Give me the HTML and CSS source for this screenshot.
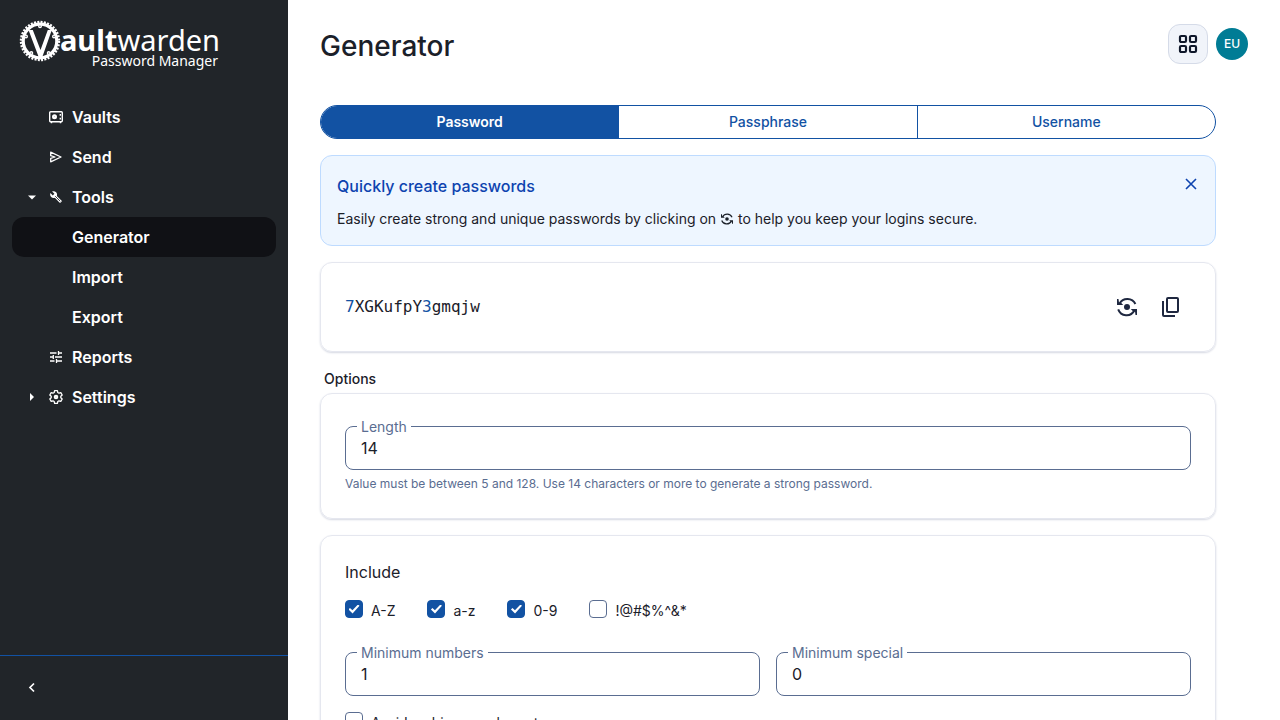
FILE: index.html
```html
<!DOCTYPE html>
<html lang="en">
<head>
    <meta charset="UTF-8">
    <meta name="viewport" content="width=device-width, initial-scale=1.0">
    <title>Generator | Vaultwarden Web</title>
    <link rel="stylesheet" href="styles.css">
</head>
<body>

<!-- shared icons -->
<svg class="sprite" aria-hidden="true">
    <symbol id="icon-generate" viewBox="0 0 20 20">
        <path d="M2.6 6.4A8.9 8.9 0 0 1 18.4 7M17.4 13.6A8.9 8.9 0 0 1 1.2 12.4" fill="none" stroke="currentColor" stroke-width="2"/>
        <path d="M0 2v6h6.2L4.3 6 2 5.6 1.5 2zM20 18v-6h-6.200l1.900 2 2.300.4.5 3.600z" fill="currentColor"/>
        <circle cx="10" cy="10" r="3" fill="currentColor"/>
    </symbol>
</svg>

<div class="layout">
    <aside class="sidebar">
        <a href="#" class="logo" aria-label="Vaultwarden Password Manager">
            <svg width="204" height="54" viewBox="0 0 204 54" fill="#fff">
                <circle cx="22" cy="23" r="18.800" fill="none" stroke="#fff" stroke-width="2.800" stroke-dasharray="2 1.281"/>
                <circle cx="22" cy="23" r="16.800" fill="none" stroke="#fff" stroke-width="3.200"/>
                <g fill="#212529" stroke="#fff" stroke-width="1.400">
                    <circle cx="22" cy="8.200" r="1.300"/>
                    <circle cx="36" cy="18.400" r="1.300"/>
                    <circle cx="30.700" cy="35" r="1.300"/>
                    <circle cx="13.300" cy="35" r="1.300"/>
                    <circle cx="8" cy="18.400" r="1.300"/>
                </g>
                <path d="M10.500 12h4.300L22.500 32 29.800 12h4L24.300 39h-3.600z"/>
                <text x="42" y="33" class="logo-name"><tspan class="logo-bold">ault</tspan>warden</text>
                <text x="200" y="48" text-anchor="end" class="logo-sub">Password Manager</text>
            </svg>
        </a>

        <nav class="nav">
            <a href="#" class="nav-item">
                <span class="caret"></span>
                <svg class="nav-icon" viewBox="0 0 16 16" fill="none" stroke="currentColor" stroke-width="1.400">
                    <rect x="1.700" y="2.700" width="12.600" height="10" rx="1"/>
                    <path d="M3.500 13v1.300M12.500 13v1.300M12.300 5v1.700M12.300 8.700v1.700"/>
                    <circle cx="6.500" cy="7.700" r="1.400" stroke-width="2.200"/>
                </svg>
                Vaults
            </a>
            <a href="#" class="nav-item">
                <span class="caret"></span>
                <svg class="nav-icon" viewBox="0 0 16 16" fill="none" stroke="currentColor" stroke-width="1.300">
                    <path d="M2.700 3.200 13 8 2.700 12.800V9.300L7 8 2.700 6.700z" stroke-linejoin="round"/>
                </svg>
                Send
            </a>
            <a href="#" class="nav-item">
                <svg class="caret" viewBox="0 0 16 16" fill="currentColor"><path d="M4 6.500h8l-4 4z"/></svg>
                <svg class="nav-icon" viewBox="-3 -3 30 30" fill="currentColor">
                    <path d="M22.700 19l-9.100-9.100c.9-2.300.4-5-1.500-6.900-2-2-5-2.400-7.400-1.300L9 6 6 9 1.600 4.700C.4 7.100.9 10.100 2.900 12.100c1.900 1.900 4.600 2.400 6.900 1.500l9.100 9.100c.4.4 1 .4 1.400 0l2.300-2.300c.5-.4.5-1.100.1-1.400z"/>
                    <path d="m10.500 10.500 9.500 9.500" stroke="#212529" stroke-width="1.600"/>
                </svg>
                Tools
            </a>
            <a href="#" class="nav-item nav-child active">Generator</a>
            <a href="#" class="nav-item nav-child">Import</a>
            <a href="#" class="nav-item nav-child">Export</a>
            <a href="#" class="nav-item">
                <span class="caret"></span>
                <svg class="nav-icon" viewBox="0 0 16 16" fill="none" stroke="currentColor" stroke-width="1.300">
                    <path d="M2 4h6.500M10.500 4H14M10.500 2v4M2 8h3M7 8h7M5.300 6v4M2 12h4.500M8.500 12H14M8.500 10v4"/>
                </svg>
                Reports
            </a>
            <a href="#" class="nav-item">
                <svg class="caret" viewBox="0 0 16 16" fill="currentColor"><path d="M6 4v8l4-4z"/></svg>
                <svg class="nav-icon" viewBox="0 0 16 16" fill="none" stroke="currentColor" stroke-width="1.300" stroke-linejoin="round">
                    <path d="M6.600 1.700h2.800l.4 1.800 1.200.7 1.800-.6 1.400 2.400-1.400 1.300v1.400l1.400 1.300-1.400 2.400-1.800-.6-1.200.7-.4 1.800H6.600l-.4-1.800-1.200-.7-1.800.6L1.800 10l1.400-1.300V7.300L1.800 6l1.400-2.400 1.800.6 1.200-.7z"/>
                    <circle cx="8" cy="8" r="1.300" stroke-width="2"/>
                </svg>
                Settings
            </a>
        </nav>

        <div class="sidebar-footer">
            <button type="button" class="collapse" aria-label="Toggle side navigation">
                <svg width="16" height="16" viewBox="0 0 16 16" fill="none" stroke="currentColor" stroke-width="1.700"><path d="M10 3.500 6 7.500l4 4"/></svg>
            </button>
        </div>
    </aside>

    <main class="main">
        <header class="header">
            <h1>Generator</h1>
            <div class="header-actions">
                <button type="button" class="switcher" aria-label="Switch products">
                    <svg width="20" height="20" viewBox="0 0 20 20" fill="none" stroke="currentColor" stroke-width="2.200">
                        <rect x="2" y="2" width="6" height="6" rx="1.200"/>
                        <rect x="12" y="2" width="6" height="6" rx="1.200"/>
                        <rect x="2" y="12" width="6" height="6" rx="1.200"/>
                        <rect x="12" y="12" width="6" height="6" rx="1.200"/>
                    </svg>
                </button>
                <button type="button" class="avatar">EU</button>
            </div>
        </header>

        <div class="content">
            <div class="tabs">
                <button type="button" class="tab selected" aria-pressed="true">Password</button>
                <button type="button" class="tab" aria-pressed="false">Passphrase</button>
                <button type="button" class="tab" aria-pressed="false">Username</button>
            </div>

            <section class="callout">
                <div class="callout-head">
                    <h2>Quickly create passwords</h2>
                    <button type="button" class="close" aria-label="Close">
                        <svg width="16" height="16" viewBox="0 0 16 16" fill="none" stroke="currentColor" stroke-width="1.600"><path d="m3 3 10 10M13 3 3 13"/></svg>
                    </button>
                </div>
                <p>Easily create strong and unique passwords by clicking on <svg class="inline-icon"><use href="#icon-generate"/></svg> to help you keep your logins secure.</p>
            </section>

            <section class="card result">
                <div class="password"><span class="digit">7</span>XGKufpY<span class="digit">3</span>gmqjw</div>
                <div class="result-actions">
                    <button type="button" class="icon-btn" aria-label="Generate password">
                        <svg width="20" height="20"><use href="#icon-generate"/></svg>
                    </button>
                    <button type="button" class="icon-btn" aria-label="Copy password">
                        <svg width="20" height="20" viewBox="0 0 20 20" fill="none" stroke="currentColor" stroke-width="2">
                            <rect x="6" y="1" width="11" height="14" rx="1"/>
                            <path d="M2 4v14a1 1 0 0 0 1 1h11"/>
                        </svg>
                    </button>
                </div>
            </section>

            <h2 class="section-title">Options</h2>

            <section class="card">
                <fieldset class="field">
                    <legend><label for="length">Length</label></legend>
                    <input type="text" inputmode="numeric" id="length" value="14">
                </fieldset>
                <p class="hint">Value must be between 5 and 128. Use 14 characters or more to generate a strong password.</p>
            </section>

            <section class="card">
                <h3>Include</h3>
                <div class="checks">
                    <label class="check"><input type="checkbox" checked> A-Z</label>
                    <label class="check"><input type="checkbox" checked> a-z</label>
                    <label class="check"><input type="checkbox" checked> 0-9</label>
                    <label class="check"><input type="checkbox"> !@#$%^&amp;*</label>
                </div>
                <div class="field-row">
                    <fieldset class="field">
                        <legend><label for="min-numbers">Minimum numbers</label></legend>
                        <input type="text" inputmode="numeric" id="min-numbers" value="1">
                    </fieldset>
                    <fieldset class="field">
                        <legend><label for="min-special">Minimum special</label></legend>
                        <input type="text" inputmode="numeric" id="min-special" value="0">
                    </fieldset>
                </div>
                <label class="check"><input type="checkbox"> Avoid ambiguous characters</label>
            </section>
        </div>
    </main>
</div>

</body>
</html>
```

FILE: styles.css
```css
* {
    box-sizing: border-box;
    margin: 0;
    padding: 0;
}
body {
    font-family: Inter, "Liberation Sans", sans-serif;
    font-size: 14px;
    line-height: 20px;
    color: #1b2029;
    background-color: #fff;
}
button,
input {
    font: inherit;
    color: inherit;
}
button {
    border: none;
    background: none;
    cursor: pointer;
}
.sprite {
    display: none;
}
.layout {
    display: flex;
    height: 100vh;
    overflow: hidden;
}

/* Sidebar */
.sidebar {
    display: flex;
    flex-direction: column;
    flex: 0 0 288px;
    background-color: #212529;
    color: #fff;
}
.logo {
    padding: 18px 18px 25px;
}
.logo svg {
    display: block;
}
.logo-name {
    font-family: "Noto Sans", "Open Sans", sans-serif;
    font-size: 29px;
    font-weight: 400;
}
.logo-bold {
    font-weight: 700;
}
.logo-sub {
    font-family: "Noto Sans", "Open Sans", sans-serif;
    font-size: 14px;
    font-weight: 400;
}
.nav {
    flex: 1;
    padding: 0 12px;
}
.nav-item {
    display: flex;
    align-items: center;
    gap: 8px;
    height: 40px;
    padding-left: 12px;
    border-radius: 12px;
    font-size: 16px;
    font-weight: 600;
    color: #fff;
    text-decoration: none;
}
.nav-child {
    padding-left: 60px;
}
.nav-item.active {
    background-color: #101115;
}
.caret,
.nav-icon {
    width: 16px;
    height: 16px;
}
.sidebar-footer {
    height: 65px;
    padding: 16px;
    border-top: 1px solid #1252a3;
}
.collapse {
    display: flex;
    align-items: center;
    justify-content: center;
    width: 32px;
    height: 32px;
}

/* Main */
.main {
    flex: 1;
    overflow: hidden;
    padding: 24px 32px;
}
.header {
    display: flex;
    justify-content: space-between;
    align-items: flex-start;
    height: 81px;
}
h1 {
    font-size: 28px;
    line-height: 45px;
    font-weight: 500;
}
.header-actions {
    display: flex;
    align-items: center;
    gap: 8px;
}
.switcher {
    display: flex;
    align-items: center;
    justify-content: center;
    width: 40px;
    height: 40px;
    border: 1px solid #d5dbe8;
    border-radius: 12px;
    background-color: #f1f4fa;
    color: #0f172a;
}
.avatar {
    width: 32px;
    height: 32px;
    border-radius: 50%;
    background-color: #007c95;
    color: #fff;
    font-size: 12px;
    font-weight: 500;
}
.content {
    max-width: 896px;
}
.tabs {
    display: flex;
    height: 34px;
    margin-bottom: 16px;
    border: 1px solid #1252a3;
    border-radius: 17px;
    overflow: hidden;
}
.tab {
    flex: 1;
    font-weight: 500;
    color: #1252a3;
}
.tab + .tab {
    border-left: 1px solid #1252a3;
}
.tab.selected {
    background-color: #1252a3;
    color: #fff;
    font-weight: 600;
}

.callout {
    margin-bottom: 16px;
    padding: 16px;
    border: 1px solid #bedbff;
    border-radius: 12px;
    background-color: #eef6ff;
}
.callout-head {
    display: flex;
    justify-content: space-between;
    align-items: flex-start;
    margin-bottom: 8px;
    color: #0d43af;
}
.callout h2 {
    font-size: 16px;
    line-height: 28px;
    font-weight: 500;
}
.callout p {
    line-height: 21px;
}
.close {
    display: flex;
    padding: 4px 0;
}
.inline-icon {
    width: 12px;
    height: 12px;
    margin: 0 1px;
    vertical-align: -1px;
}

.card {
    margin-bottom: 16px;
    padding: 24px;
    border: 1px solid #e5e7ef;
    border-radius: 12px;
    box-shadow: 0 1px 2px #d5d8e2;
}
.result {
    display: flex;
    justify-content: space-between;
    align-items: center;
}
.password {
    font-family: "DejaVu Sans Mono", monospace;
    font-size: 16px;
}
.digit {
    color: #1252a3;
}
.result-actions {
    display: flex;
    gap: 4px;
}
.icon-btn {
    display: flex;
    align-items: center;
    justify-content: center;
    width: 40px;
    height: 40px;
    color: #1f2840;
}
.section-title {
    margin-bottom: 4px;
    padding-left: 4px;
    font-size: 14px;
    line-height: 21px;
    font-weight: 500;
}
h3 {
    margin-bottom: 16px;
    font-size: 16px;
    line-height: 24px;
    font-weight: 400;
}

/* Form controls */
.field {
    flex: 1;
    min-width: 0;
    padding: 0 11px;
    border: 1px solid #5a6d91;
    border-radius: 8px;
}
.field legend {
    padding: 0 4px;
    line-height: 17px;
    color: #5a6d91;
}
.field label {
    display: block;
}
.field input {
    display: block;
    width: 100%;
    height: 34px;
    padding: 0 4px 8px;
    border: none;
    outline: none;
    background: none;
    font-size: 16px;
}
.field-row {
    display: flex;
    gap: 16px;
    margin-bottom: 16px;
}
.hint {
    padding: 6px 0 2px;
    font-size: 12px;
    line-height: 16px;
    color: #5a6d91;
}
.checks {
    display: flex;
    gap: 32px;
    margin-bottom: 22px;
}
.check {
    display: flex;
    align-items: flex-start;
    gap: 8px;
    line-height: 22px;
}
.check input {
    appearance: none;
    display: grid;
    place-items: center;
    width: 18px;
    height: 18px;
    border: 1px solid #5a6d91;
    border-radius: 4px;
}
.check input:checked {
    border-color: #1252a3;
    background-color: #1252a3;
}
.check input:checked::before {
    content: "";
    width: 11px;
    height: 9px;
    background-color: #fff;
    clip-path: polygon(0 55%, 13% 40%, 36% 65%, 86% 0, 100% 15%, 37% 100%);
}
```
